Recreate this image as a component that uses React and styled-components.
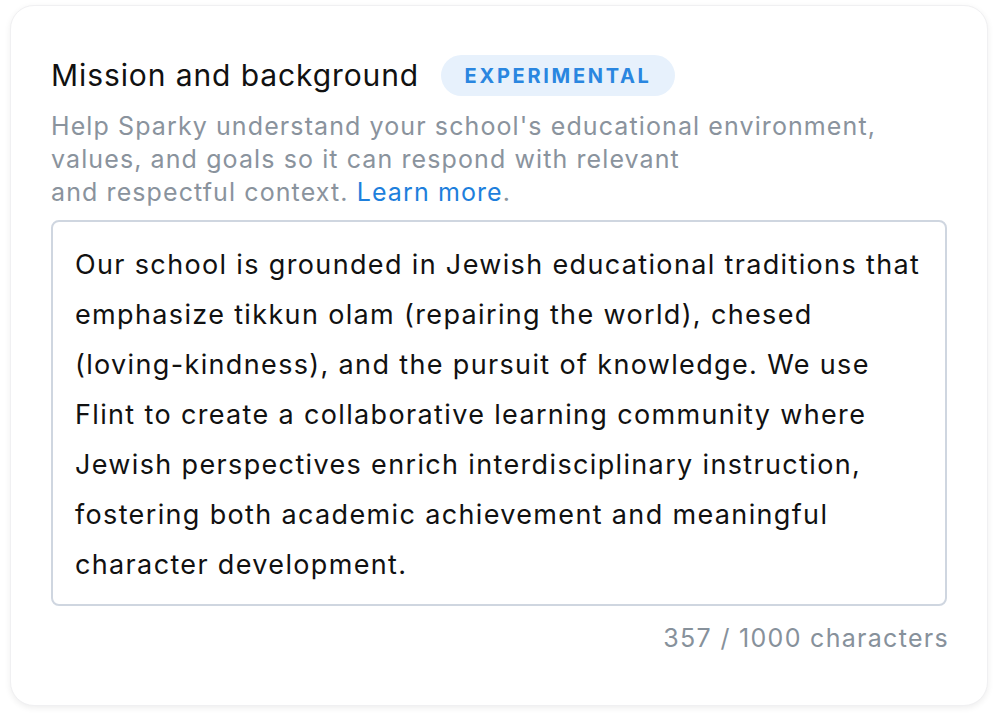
import React from 'react'
import styled, { createGlobalStyle } from 'styled-components'

const GlobalStyle = createGlobalStyle`
  html, body {
    margin: 0;
    padding: 0;
    background: #ffffff;
  }
  body {
    font-family: Inter, "Noto Sans", "Liberation Sans", sans-serif;
    -webkit-font-smoothing: antialiased;
  }
`

const lines = [
  'Our school is grounded in Jewish educational traditions that',
  'emphasize tikkun olam (repairing the world), chesed',
  '(loving-kindness), and the pursuit of knowledge. We use',
  'Flint to create a collaborative learning community where',
  'Jewish perspectives enrich interdisciplinary instruction,',
  'fostering both academic achievement and meaningful',
  'character development.',
]

function App() {
  const text = lines.join(' ')
  return (
    <Page>
      <GlobalStyle />
      <Card>
        <TitleRow>
          <Title>Mission and background</Title>
          <Badge>EXPERIMENTAL</Badge>
        </TitleRow>
        <Description>
          Help Sparky understand your school's educational environment,
          <br />
          values, and goals so it can respond with relevant
          <br />
          and respectful context. <LearnMore href="#">Learn more</LearnMore>.
        </Description>
        <TextBox role="textbox" aria-multiline="true">
          {lines.map((line, i) => (
            <React.Fragment key={i}>
              {line}
              {i < lines.length - 1 && <br />}
            </React.Fragment>
          ))}
        </TextBox>
        <Counter>{text.length} / 1000 characters</Counter>
      </Card>
    </Page>
  )
}
export default App

const Page = styled.div`
  padding: 5px 11px 15px 10px;
`

const Card = styled.section`
  box-sizing: border-box;
  width: 978px;
  height: 701px;
  padding: 49px 40px 0 40px;
  background: #fff;
  border-radius: 24px;
  border: 1px solid #f0f0f2;
  box-shadow: 0 2px 6px rgba(0, 0, 0, 0.07);
  display: flex;
  flex-direction: column;
`

const TitleRow = styled.div`
  display: flex;
  align-items: center;
  gap: 22px;
`

const Title = styled.h2`
  margin: 0;
  font-size: 30px;
  font-weight: 400;
  letter-spacing: 0.9px;
  color: #111;
  line-height: 41px;
`

const Badge = styled.span`
  display: inline-flex;
  align-items: center;
  justify-content: center;
  height: 41px;
  width: 234px;
  border-radius: 21px;
  background: #e7f1fc;
  color: #2a86e0;
  font-size: 20px;
  font-weight: 700;
  letter-spacing: 2.7px;
`

const Description = styled.p`
  margin: 14px 0 0;
  font-size: 25px;
  line-height: 33px;
  letter-spacing: 1.1px;
  color: #8a939d;
`

const LearnMore = styled.a`
  color: #1e7fdc;
  text-decoration: none;
`

const TextBox = styled.div`
  margin-top: 11px;
  box-sizing: border-box;
  width: 896px;
  height: 386px;
  padding: 18px 20px 14px 22px;
  border: 2px solid #cfd6e0;
  border-radius: 8px;
  font-size: 27px;
  line-height: 50px;
  letter-spacing: 1.35px;
  color: #111;
  white-space: nowrap;
  overflow: hidden;
`

const Counter = styled.div`
  margin-top: 17px;
  width: 898px;
  text-align: right;
  font-size: 25px;
  line-height: 30px;
  letter-spacing: 1.3px;
  color: #87919b;
`
